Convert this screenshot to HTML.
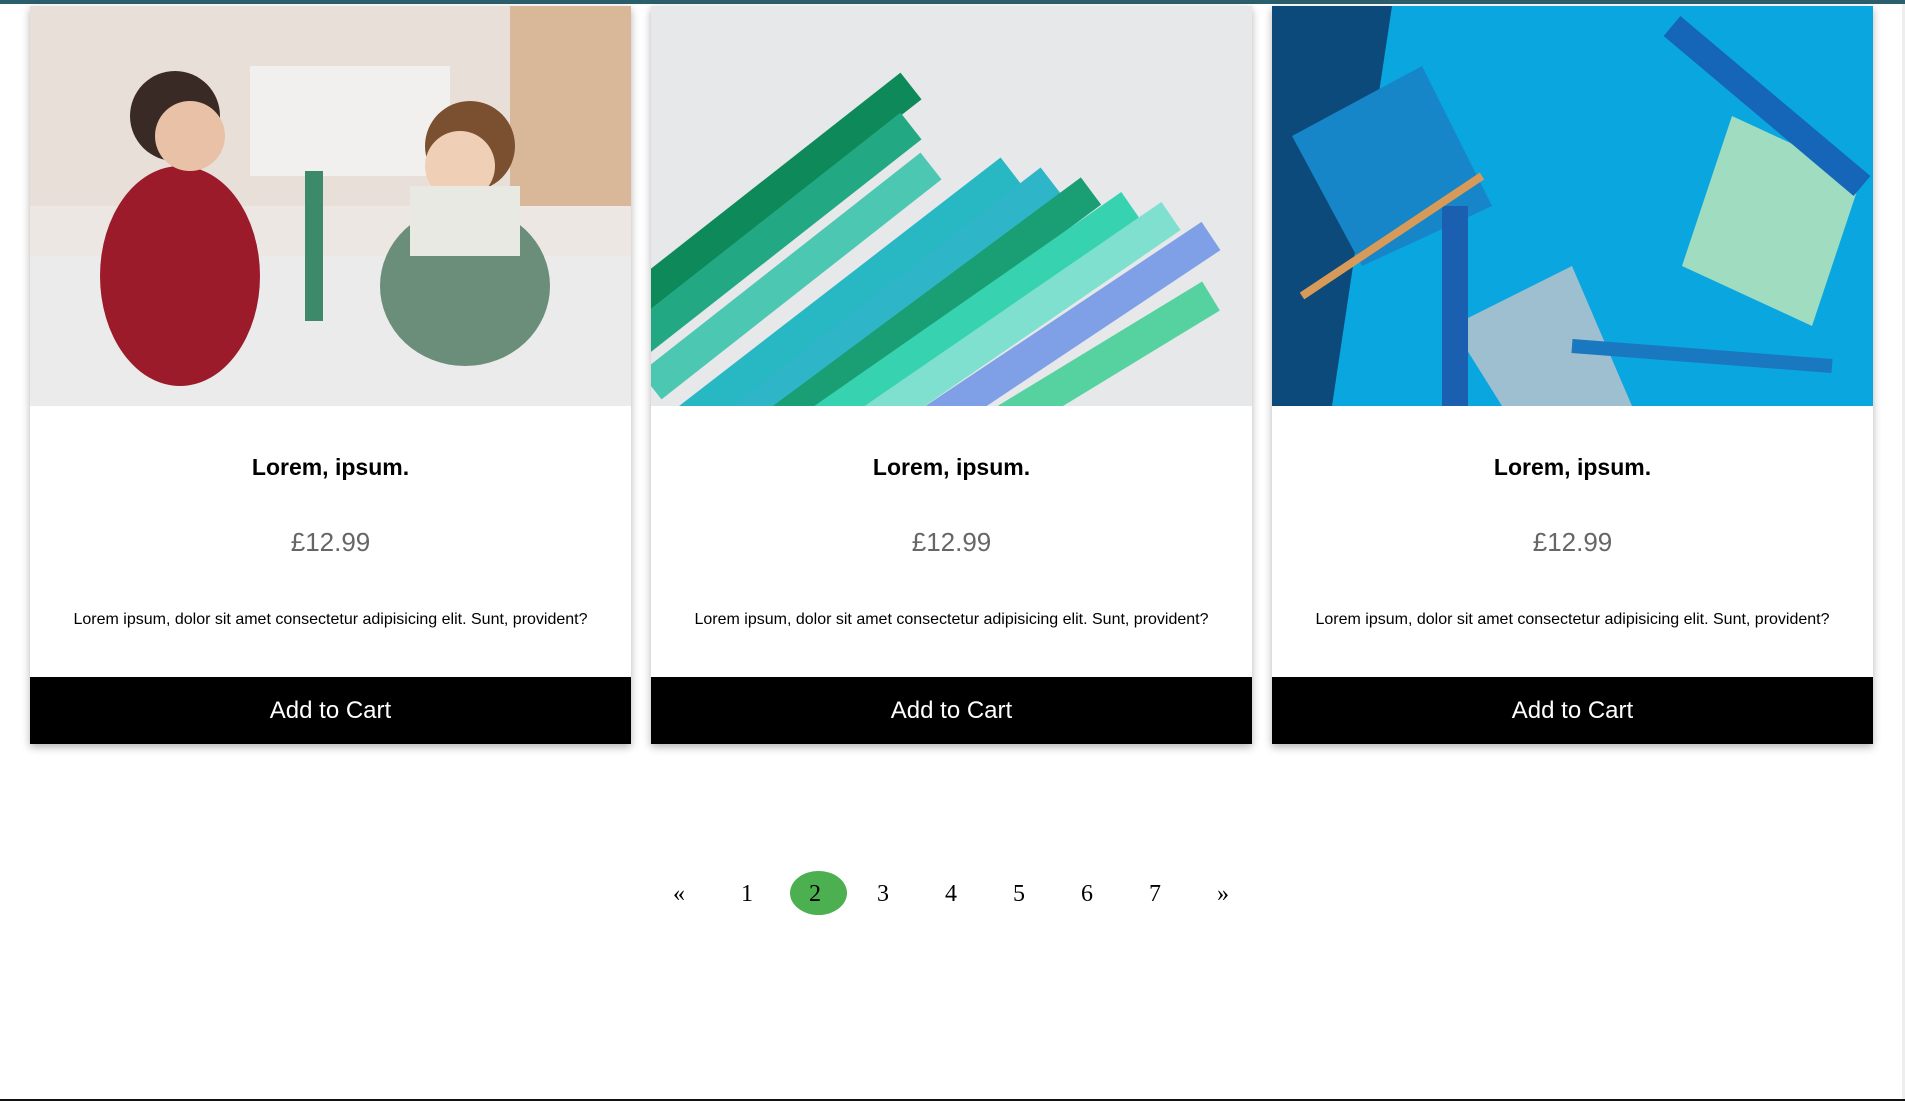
<!DOCTYPE html>
<html><head><meta charset="utf-8"><style>
html,body{margin:0;padding:0;width:1905px;height:1101px;overflow:hidden;background:#fff;font-family:"Liberation Sans",sans-serif;position:relative}
.top{position:absolute;left:0;top:0;width:1905px;height:4px;background:#2b5f6c}
.sb{position:absolute;right:0;top:4px;width:3px;height:1095px;background:#eee}
.bot{position:absolute;left:0;bottom:0;width:1905px;height:2px;background:#111}
.card{position:absolute;top:6px;width:601px;height:738px;background:#fff;box-shadow:0 3px 8px rgba(0,0,0,.3)}
.img{height:400px;overflow:hidden;position:relative}
.t{position:absolute;top:448px;width:100%;text-align:center;font-weight:bold;font-size:23px}
.p{position:absolute;top:521px;width:100%;text-align:center;font-size:26px;color:#666}
.d{position:absolute;top:605px;width:100%;text-align:center;font-size:16px}
.b{position:absolute;top:671px;height:67px;width:100%;background:#000;color:#fff;text-align:center;line-height:67px;font-size:24px}
.pg{position:absolute;top:872px;height:44px;line-height:44px;font-family:"Liberation Serif",serif;font-size:24px;width:40px;text-align:center;margin-left:-20px}
.act{position:absolute;left:790px;top:871px;width:57px;height:44px;border-radius:50%;background:#4caf50}
</style></head><body>
<div class="top"></div><div class="sb"></div><div class="bot"></div>
<div class="card" style="left:30px">
<div class="img"><svg width="601" height="400"><rect width="601" height="400" fill="#ece7e2"/><rect x="0" y="0" width="601" height="200" fill="#e8e0d8"/><rect x="480" y="0" width="121" height="200" fill="#d9b89a"/><rect x="220" y="60" width="200" height="110" fill="#f2f0ee"/><rect x="0" y="250" width="601" height="150" fill="#ebebeb"/><ellipse cx="150" cy="270" rx="80" ry="110" fill="#9b1b2b"/><circle cx="145" cy="110" r="45" fill="#3a2a25"/><circle cx="160" cy="130" r="35" fill="#e8c1a7"/><rect x="275" y="165" width="18" height="150" fill="#3c8a6a"/><ellipse cx="435" cy="280" rx="85" ry="80" fill="#6a8e7a"/><circle cx="440" cy="140" r="45" fill="#7a5030"/><circle cx="430" cy="160" r="35" fill="#efcfb5"/><rect x="380" y="180" width="110" height="70" fill="#e9e9e4"/></svg></div>
<div class="t">Lorem, ipsum.</div><div class="p">£12.99</div>
<div class="d">Lorem ipsum, dolor sit amet consectetur adipisicing elit. Sunt, provident?</div>
<div class="b">Add to Cart</div></div>
<div class="card" style="left:651px">
<div class="img"><svg width="601" height="400"><rect width="601" height="400" fill="#e6e8ea"/><g stroke-width="34" stroke-linecap="butt"><line x1="-20" y1="300" x2="260" y2="80" stroke="#0e8a5a"/><line x1="-20" y1="340" x2="260" y2="120" stroke="#22a983"/><line x1="0" y1="380" x2="280" y2="160" stroke="#4cc7b1"/><line x1="30" y1="420" x2="360" y2="165" stroke="#28b8c4"/><line x1="70" y1="430" x2="400" y2="175" stroke="#2fb5c8"/><line x1="110" y1="430" x2="440" y2="185" stroke="#1a9f74"/><line x1="150" y1="430" x2="480" y2="200" stroke="#37d3b0"/><line x1="200" y1="430" x2="520" y2="210" stroke="#7fe0d0"/><line x1="260" y1="430" x2="560" y2="230" stroke="#7fa0e6"/><line x1="330" y1="430" x2="560" y2="290" stroke="#55d2a0"/></g></svg></div>
<div class="t">Lorem, ipsum.</div><div class="p">£12.99</div>
<div class="d">Lorem ipsum, dolor sit amet consectetur adipisicing elit. Sunt, provident?</div>
<div class="b">Add to Cart</div></div>
<div class="card" style="left:1272px">
<div class="img"><svg width="601" height="400"><rect width="601" height="400" fill="#0aa6df"/><polygon points="0,0 120,0 60,400 0,400" fill="#0b4a7a"/><polygon points="20,130 150,60 220,200 90,260" fill="#1686c8"/><polygon points="460,110 590,170 540,320 410,260" fill="#9fdcc0"/><polygon points="180,320 300,260 360,400 230,400" fill="#9dbfcf"/><rect x="170" y="200" width="26" height="200" fill="#1a5fb0"/><line x1="300" y1="340" x2="560" y2="360" stroke="#1a78c0" stroke-width="14"/><line x1="30" y1="290" x2="210" y2="170" stroke="#d89a58" stroke-width="8"/><line x1="400" y1="20" x2="590" y2="180" stroke="#1565b8" stroke-width="26"/></svg></div>
<div class="t">Lorem, ipsum.</div><div class="p">£12.99</div>
<div class="d">Lorem ipsum, dolor sit amet consectetur adipisicing elit. Sunt, provident?</div>
<div class="b">Add to Cart</div></div>
<div class="act"></div>
<div class="pg" style="left:679px">«</div>
<div class="pg" style="left:747px">1</div>
<div class="pg" style="left:815px">2</div>
<div class="pg" style="left:883px">3</div>
<div class="pg" style="left:951px">4</div>
<div class="pg" style="left:1019px">5</div>
<div class="pg" style="left:1087px">6</div>
<div class="pg" style="left:1155px">7</div>
<div class="pg" style="left:1223px">»</div>
</body></html>
